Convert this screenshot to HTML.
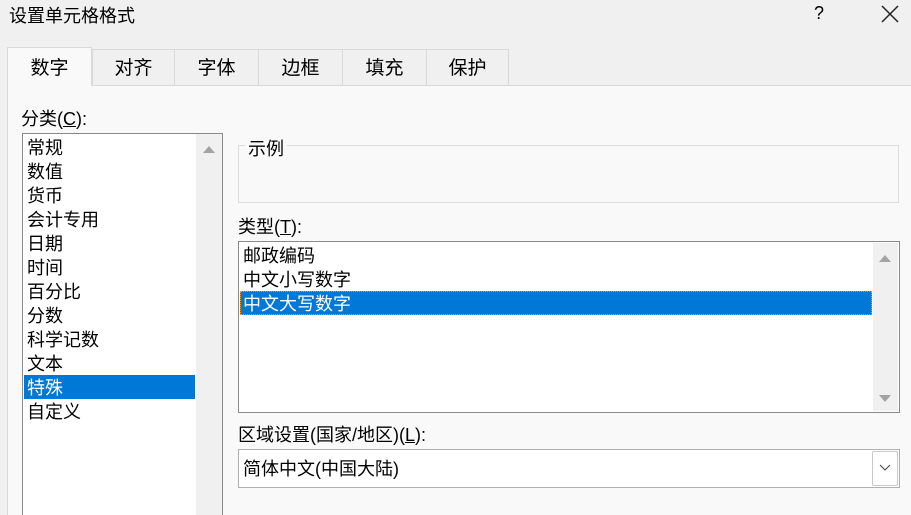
<!DOCTYPE html>
<html><head><meta charset="utf-8"><style>
*{margin:0;padding:0;box-sizing:border-box}
html,body{width:911px;height:515px;overflow:hidden}
body{background:#f0f0f0;font-family:"Liberation Sans","Microsoft YaHei","Noto Sans CJK SC",sans-serif;font-size:18px;color:#000;position:relative}
.a{position:absolute;white-space:nowrap}
.tab{position:absolute;top:49px;height:36px;border:1px solid #d9d9d9;border-bottom:none;background:#f0f0f0;text-align:center;line-height:38px;font-size:19px}
.panel{position:absolute;left:7px;top:85px;width:904px;height:430px;background:#f9f9f9;border-top:1px solid #d9d9d9;border-left:1px solid #d9d9d9}
.it{position:absolute;left:27px;height:24px;line-height:26px}
</style></head><body>
<div class="a" style="left:9px;top:2px;font-size:18px">设置单元格格式</div>
<div class="a" style="left:814px;top:3px;font-size:18px">?</div>
<svg class="a" style="left:881px;top:5px" width="18" height="18"><path d="M1 1L17 17M17 1L1 17" stroke="#222" stroke-width="1.5"/></svg>
<div class="panel"></div>
<div class="tab" style="left:7px;top:47px;width:85px;height:39px;line-height:42px;background:#f9f9f9;border-color:#d9d9d9;z-index:2">数字</div>
<div class="tab" style="left:92px;width:83px">对齐</div>
<div class="tab" style="left:174px;width:85px">字体</div>
<div class="tab" style="left:258px;width:85px">边框</div>
<div class="tab" style="left:342px;width:85px">填充</div>
<div class="tab" style="left:426px;width:83px">保护</div>
<div class="a" style="left:21px;top:105px">分类(<u>C</u>):</div>
<div class="a" style="left:22px;top:133px;width:201px;height:390px;background:#fff;border:1px solid #8a8a8a"></div>
<div class="a" style="left:196px;top:134px;width:26px;height:390px;background:#f0f0f0"></div>
<svg class="a" style="left:202px;top:144px" width="14" height="10"><path d="M1 9L7 2L13 9Z" fill="#a3a3a3"/></svg>
<div class="a" style="left:24px;top:375px;width:171px;height:24px;background:#0078d7"></div>
<div class="it" style="top:135px">常规</div>
<div class="it" style="top:159px">数值</div>
<div class="it" style="top:183px">货币</div>
<div class="it" style="top:207px">会计专用</div>
<div class="it" style="top:231px">日期</div>
<div class="it" style="top:255px">时间</div>
<div class="it" style="top:279px">百分比</div>
<div class="it" style="top:303px">分数</div>
<div class="it" style="top:327px">科学记数</div>
<div class="it" style="top:351px">文本</div>
<div class="it" style="top:375px;color:#fff">特殊</div>
<div class="it" style="top:399px">自定义</div>
<div class="a" style="left:238px;top:145px;width:661px;height:58px;border:1px solid #dcdcdc"></div>
<div class="a" style="left:245px;top:135px;background:#f9f9f9;padding:0 3px">示例</div>
<div class="a" style="left:238px;top:213px">类型(<u>T</u>):</div>
<div class="a" style="left:238px;top:241px;width:662px;height:172px;background:#fff;border:1px solid #8a8a8a"></div>
<div class="a" style="left:873px;top:243px;width:25px;height:168px;background:#f0f0f0"></div>
<svg class="a" style="left:878px;top:253px" width="14" height="10"><path d="M1 9L7 2L13 9Z" fill="#a3a3a3"/></svg>
<svg class="a" style="left:878px;top:394px" width="14" height="10"><path d="M1 1L7 8L13 1Z" fill="#a3a3a3"/></svg>
<div class="a" style="left:240px;top:291px;width:632px;height:24px;background:#0078d7;outline:1px dotted #e8a030;outline-offset:-1px"></div>
<div class="a" style="left:243px;top:243px;line-height:26px">邮政编码</div>
<div class="a" style="left:243px;top:267px;line-height:26px">中文小写数字</div>
<div class="a" style="left:243px;top:291px;line-height:26px;color:#fff">中文大写数字</div>
<div class="a" style="left:238px;top:421px">区域设置(国家/地区)(<u>L</u>):</div>
<div class="a" style="left:238px;top:449px;width:662px;height:39px;background:#fff;border:1px solid #b0b0b0"></div>
<div class="a" style="left:872px;top:451px;width:26px;height:35px;border:1px solid #c8c8c8;border-radius:2px;background:#fff"></div>
<svg class="a" style="left:879px;top:464px" width="12" height="8"><path d="M1 1L6 6L11 1" stroke="#444" fill="none"/></svg>
<div class="a" style="left:243px;top:457px;line-height:24px">简体中文(中国大陆)</div>
</body></html>
